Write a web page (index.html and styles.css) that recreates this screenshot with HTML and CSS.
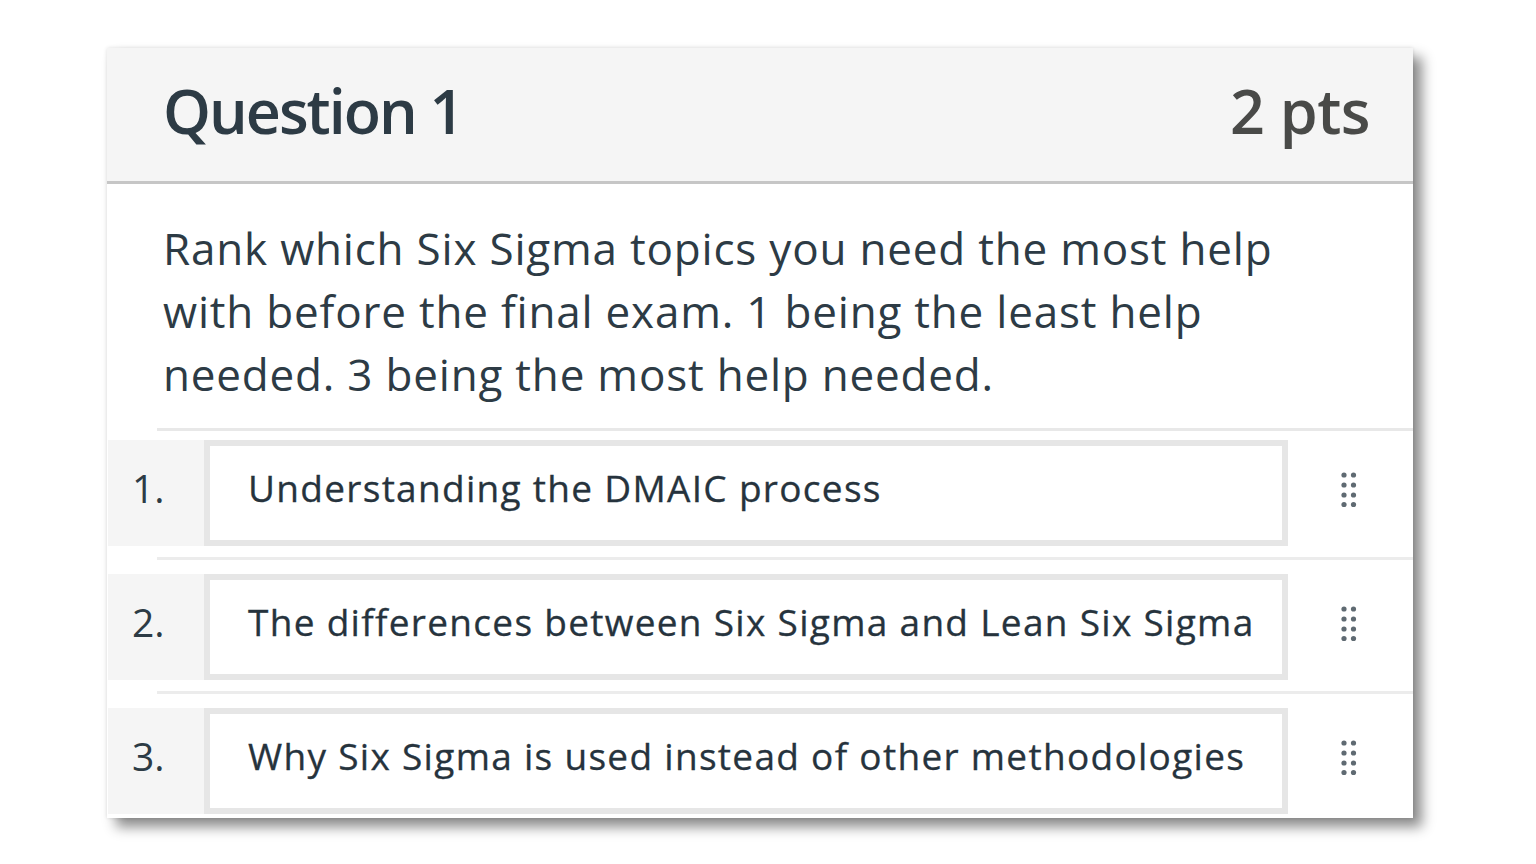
FILE: index.html
```html
<!DOCTYPE html>
<html lang="en">
<head>
<meta charset="utf-8">
<title>Question 1</title>
<link rel="stylesheet" href="styles.css">
</head>
<body>
<div class="card">
  <div class="header">
    <h2 class="title">Question 1</h2>
    <div class="pts">2 pts</div>
  </div>
  <div class="prompt">
    <p>Rank which Six Sigma topics you need the most help<br>with before the final exam. 1 being the least help<br>needed. 3 being the most help needed.</p>
  </div>
  <ol class="ranks">
    <li class="rank">
      <div class="row">
        <div class="num">1.</div>
        <div class="answer">Understanding the DMAIC process</div>
        <div class="handle"><svg width="16" height="38" viewBox="0 0 16 38"><g fill="#5f6a72"><circle cx="3" cy="4" r="2.6"/><circle cx="12.5" cy="4" r="2.6"/><circle cx="3" cy="14" r="2.6"/><circle cx="12.5" cy="14" r="2.6"/><circle cx="3" cy="24" r="2.6"/><circle cx="12.5" cy="24" r="2.6"/><circle cx="3" cy="33.5" r="2.6"/><circle cx="12.5" cy="33.5" r="2.6"/></g></svg></div>
      </div>
    </li>
    <li class="rank">
      <div class="row">
        <div class="num">2.</div>
        <div class="answer">The differences between Six Sigma and Lean Six Sigma</div>
        <div class="handle"><svg width="16" height="38" viewBox="0 0 16 38"><g fill="#5f6a72"><circle cx="3" cy="4" r="2.6"/><circle cx="12.5" cy="4" r="2.6"/><circle cx="3" cy="14" r="2.6"/><circle cx="12.5" cy="14" r="2.6"/><circle cx="3" cy="24" r="2.6"/><circle cx="12.5" cy="24" r="2.6"/><circle cx="3" cy="33.5" r="2.6"/><circle cx="12.5" cy="33.5" r="2.6"/></g></svg></div>
      </div>
    </li>
    <li class="rank">
      <div class="row">
        <div class="num">3.</div>
        <div class="answer">Why Six Sigma is used instead of other methodologies</div>
        <div class="handle"><svg width="16" height="38" viewBox="0 0 16 38"><g fill="#5f6a72"><circle cx="3" cy="4" r="2.6"/><circle cx="12.5" cy="4" r="2.6"/><circle cx="3" cy="14" r="2.6"/><circle cx="12.5" cy="14" r="2.6"/><circle cx="3" cy="24" r="2.6"/><circle cx="12.5" cy="24" r="2.6"/><circle cx="3" cy="33.5" r="2.6"/><circle cx="12.5" cy="33.5" r="2.6"/></g></svg></div>
      </div>
    </li>
  </ol>
</div>
</body>
</html>
```
FILE: styles.css
```css
html, body {
  margin: 0;
  padding: 0;
  background: #ffffff;
}
body {
  min-height: 100vh;
  box-sizing: border-box;
  padding: 48px 0 0 107px;
  font-family: "Open Sans", "Noto Sans", sans-serif;
  color: #2d3b45;
}
.card {
  width: 1306px;
  background: #ffffff;
  box-shadow: 0 0 4px rgba(0, 0, 0, 0.12), 9px 9px 12px rgba(0, 0, 0, 0.45);
  padding-bottom: 4px;
}
.header {
  height: 136px;
  box-sizing: border-box;
  background: #f5f5f5;
  border-bottom: 3px solid #c6c6c6;
  display: flex;
  align-items: center;
  justify-content: space-between;
  padding: 0 43px 8px 56px;
}
.title {
  margin: 0;
  font-size: 61px;
  font-weight: 600;
  letter-spacing: -2px;
  color: #2d3b45;
}
.pts {
  font-size: 61px;
  font-weight: 600;
  letter-spacing: -0.5px;
  color: #494a48;
}
.prompt {
  margin-left: 50px;
  border-bottom: 3px solid #e8e8e8;
  padding: 33px 0 22px 6px;
}
.prompt p {
  margin: 0;
  font-size: 44px;
  line-height: 63px;
  letter-spacing: 0.8px;
  color: #2d3b45;
}
.ranks {
  list-style: none;
  margin: 9px 0 0 0;
  padding: 0;
}
.rank + .rank::before {
  content: "";
  display: block;
  height: 3px;
  background: #ececec;
  margin: 11px 0 14px 50px;
}
.row {
  display: flex;
  height: 106px;
}
.num {
  width: 96px;
  margin-left: 1px;
  background: #f5f5f5;
  box-sizing: border-box;
  padding: 21px 0 0 24px;
  font-size: 39px;
  font-weight: 500;
  color: #2d3b45;
}
.answer {
  width: 1084px;
  box-sizing: border-box;
  border: 6px solid #e6e6e6;
  background: #ffffff;
  display: flex;
  align-items: center;
  padding: 0 0 11px 38px;
  font-size: 37px;
  font-weight: 500;
  letter-spacing: 1.3px;
  white-space: nowrap;
  color: #26333d;
  -webkit-text-stroke: 0.3px #26333d;
}
.handle {
  flex: 1;
  display: flex;
  justify-content: center;
  align-items: flex-start;
  padding-top: 31px;
  padding-right: 4px;
}
```
